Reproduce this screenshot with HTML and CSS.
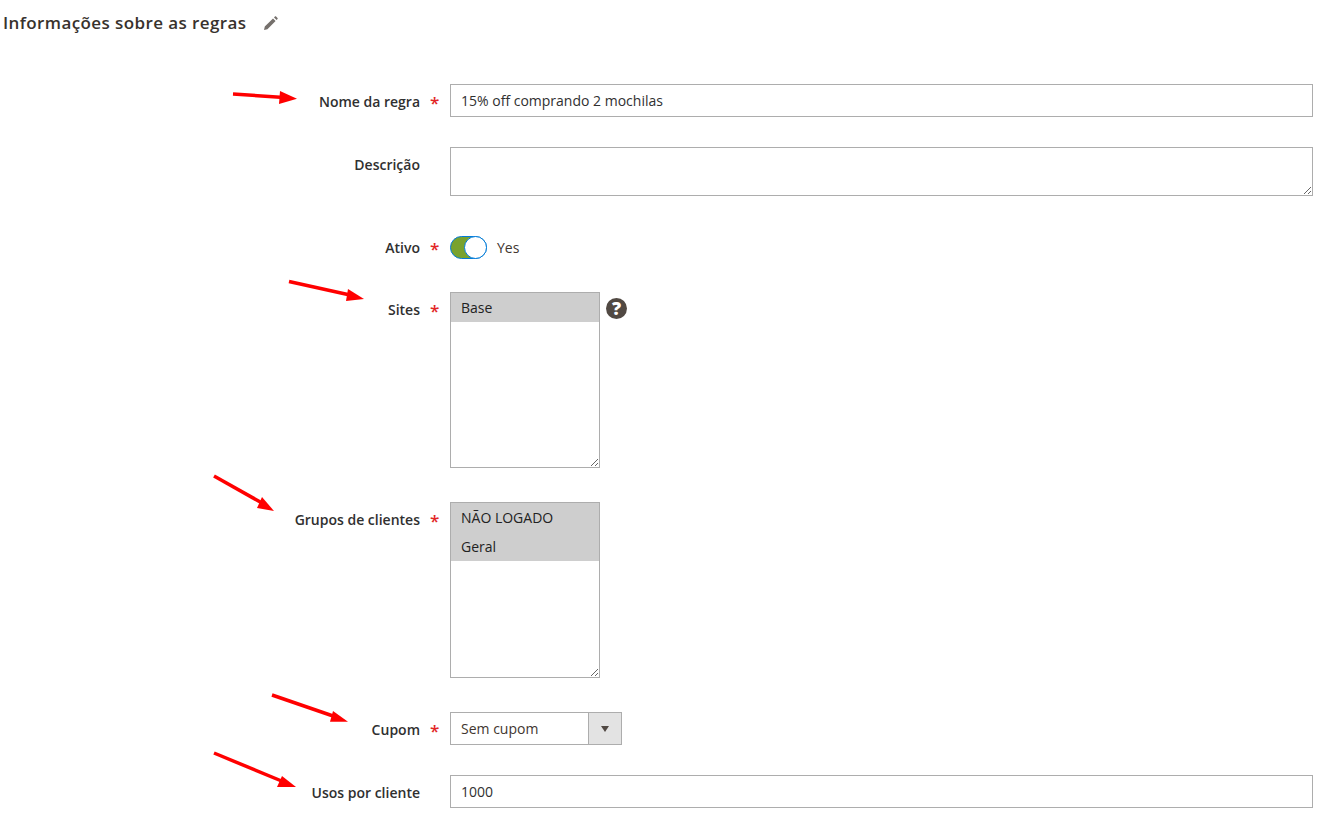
FILE: index.html
```html
<!DOCTYPE html>
<html lang="pt">
<head>
<meta charset="utf-8">
<title>Informações sobre as regras</title>
<link rel="stylesheet" href="styles.css">
</head>
<body>
<main class="page">
  <header class="section-title">
    <h2>Informações sobre as regras</h2>
    <svg class="pencil" viewBox="0 0 16 16" width="16" height="16" aria-hidden="true"><path d="M1 15l.8-3.400L10 3.400l2.600 2.600-8.200 8.200zM11 2.400l.9-.9c.4-.4.8-.4 1.200 0l1.400 1.400c.4.4.4.8 0 1.200l-.9.9z"/></svg>
  </header>
  <form class="form">
    <div class="row row-name">
      <label class="label req">Nome da regra</label>
      <input class="input" type="text" value="15% off comprando 2 mochilas">
    </div>
    <div class="row row-desc">
      <label class="label">Descrição</label>
      <textarea class="input textarea"></textarea>
    </div>
    <div class="row row-active">
      <label class="label req">Ativo</label>
      <div class="toggle-wrap"><span class="toggle"><span class="knob"></span></span><span class="toggle-text">Yes</span></div>
    </div>
    <div class="row row-sites">
      <label class="label req">Sites</label>
      <div class="listbox"><div class="opt">Base</div></div>
      <span class="help">?</span>
    </div>
    <div class="row row-groups">
      <label class="label req">Grupos de clientes</label>
      <div class="listbox"><div class="opt">NÃO LOGADO</div><div class="opt">Geral</div></div>
    </div>
    <div class="row row-coupon">
      <label class="label req">Cupom</label>
      <div class="select"><span class="select-value">Sem cupom</span><span class="select-btn"><span class="caret"></span></span></div>
    </div>
    <div class="row">
      <label class="label">Usos por cliente</label>
      <input class="input" type="text" value="1000">
    </div>
  </form>
  <svg class="arrows" width="1335" height="816" viewBox="0 0 1335 816" aria-hidden="true">
    <g class="arrow-set">
      <line x1="233" y1="94" x2="284" y2="97.500"/><path d="M280 91l17 7.700-18 5.300z"/>
      <line x1="289" y1="281.500" x2="350" y2="295"/><path d="M348 289l16 10-18 2z"/>
      <line x1="214" y1="476" x2="262" y2="503"/><path d="M262 497l12 14-17-3z"/>
      <line x1="272" y1="695" x2="336" y2="717"/><path d="M333 711l15 10.700-18 0z"/>
      <line x1="214" y1="753" x2="284" y2="782"/><path d="M282 776l14 11-19 0z"/>
    </g>
  </svg>
</main>
</body>
</html>
```

FILE: styles.css
```css
* { box-sizing: border-box; }
html, body { margin: 0; padding: 0; background: #fff; }
body {
  font-family: "Open Sans", "Noto Sans", sans-serif;
  font-size: 14px;
  color: #303030;
  height: 816px;
  overflow: hidden;
}
.page { position: relative; height: 816px; padding-top: 11px; }
.section-title {
  display: flex;
  align-items: center;
  gap: 17px;
  height: 24px;
  margin: 0 0 0 3px;
}
.section-title h2 {
  margin: 0;
  font-size: 17px;
  font-weight: 600;
  letter-spacing: .4px;
  color: #38322d;
  line-height: 24px;
}
.pencil { fill: #75706c; flex: none; }
.form {
  display: flex;
  flex-direction: column;
  gap: 30px;
  padding: 49px 22px 0 0;
}
.row { display: flex; align-items: flex-start; }
.row-active { margin-bottom: 3px; }
.row-sites, .row-groups { margin-bottom: 4px; }
.row-desc { margin-bottom: 10px; padding-bottom: 2px; }
.label {
  flex: none;
  width: 420px;
  padding-top: 8px;
  margin-right: 30px;
  position: relative;
  text-align: right;
  font-size: 14px;
  font-weight: 600;
  line-height: 19px;
  color: #303030;
}
.req::after {
  content: "*";
  position: absolute;
  left: 430px;
  top: 9px;
  color: #e22626;
  font-size: 17px;
  font-weight: 600;
}
.input {
  display: block;
  flex: 1;
  height: 33px;
  border: 1px solid #adadad;
  border-radius: 0;
  background: #fff;
  padding: 0 10px;
  margin: 0;
  outline: 0;
  font: 400 14px/19px "Open Sans", "Noto Sans", sans-serif;
  color: #303030;
}
.textarea { height: 49px; resize: vertical; padding: 6px 10px; }
.row-active .label { padding-top: 0; }
.row-active .label.req::after { top: 1px; }
.toggle-wrap { display: flex; align-items: center; gap: 10px; height: 23px; margin-top: -2px; }
.toggle {
  display: block;
  position: relative;
  width: 37px;
  height: 23px;
  border: 1px solid #007bdb;
  border-radius: 12px;
  background: #79a22e;
}
.knob {
  position: absolute;
  right: -1px;
  top: -1px;
  width: 23px;
  height: 23px;
  background: #fff;
  border-radius: 50%;
  border: 1px solid #007bdb;
}
.toggle-text { line-height: 19px; color: #41362f; }
.listbox {
  flex: none;
  width: 150px;
  height: 176px;
  border: 1px solid #adadad;
  background: #fff;
  resize: both;
  overflow: auto;
}
.opt {
  height: 29px;
  padding: 0 10px;
  line-height: 29px;
  background: #cecece;
  color: #222;
}
.help {
  flex: none;
  width: 21px;
  height: 21px;
  margin: 6px 0 0 6px;
  border-radius: 50%;
  background: #514943;
  color: #fff;
  font-size: 18px;
  font-weight: 800;
  line-height: 21px;
  text-align: center;
}
.select {
  flex: none;
  display: flex;
  width: 172px;
  height: 33px;
  border: 1px solid #adadad;
  background: #fff;
}
.select-value { flex: 1; padding: 0 10px; line-height: 31px; color: #41362f; }
.select-btn {
  flex: none;
  width: 33px;
  display: flex;
  align-items: center;
  justify-content: center;
  background: #e3e3e3;
  border-left: 1px solid #adadad;
}
.caret {
  width: 0;
  height: 0;
  border-left: 4px solid transparent;
  border-right: 4px solid transparent;
  border-top: 6px solid #514943;
}
.arrows { position: absolute; left: 0; top: 0; pointer-events: none; }
.arrow-set { fill: #f00; }
.arrow-set line { stroke: #f00; stroke-width: 3.500; }
```
